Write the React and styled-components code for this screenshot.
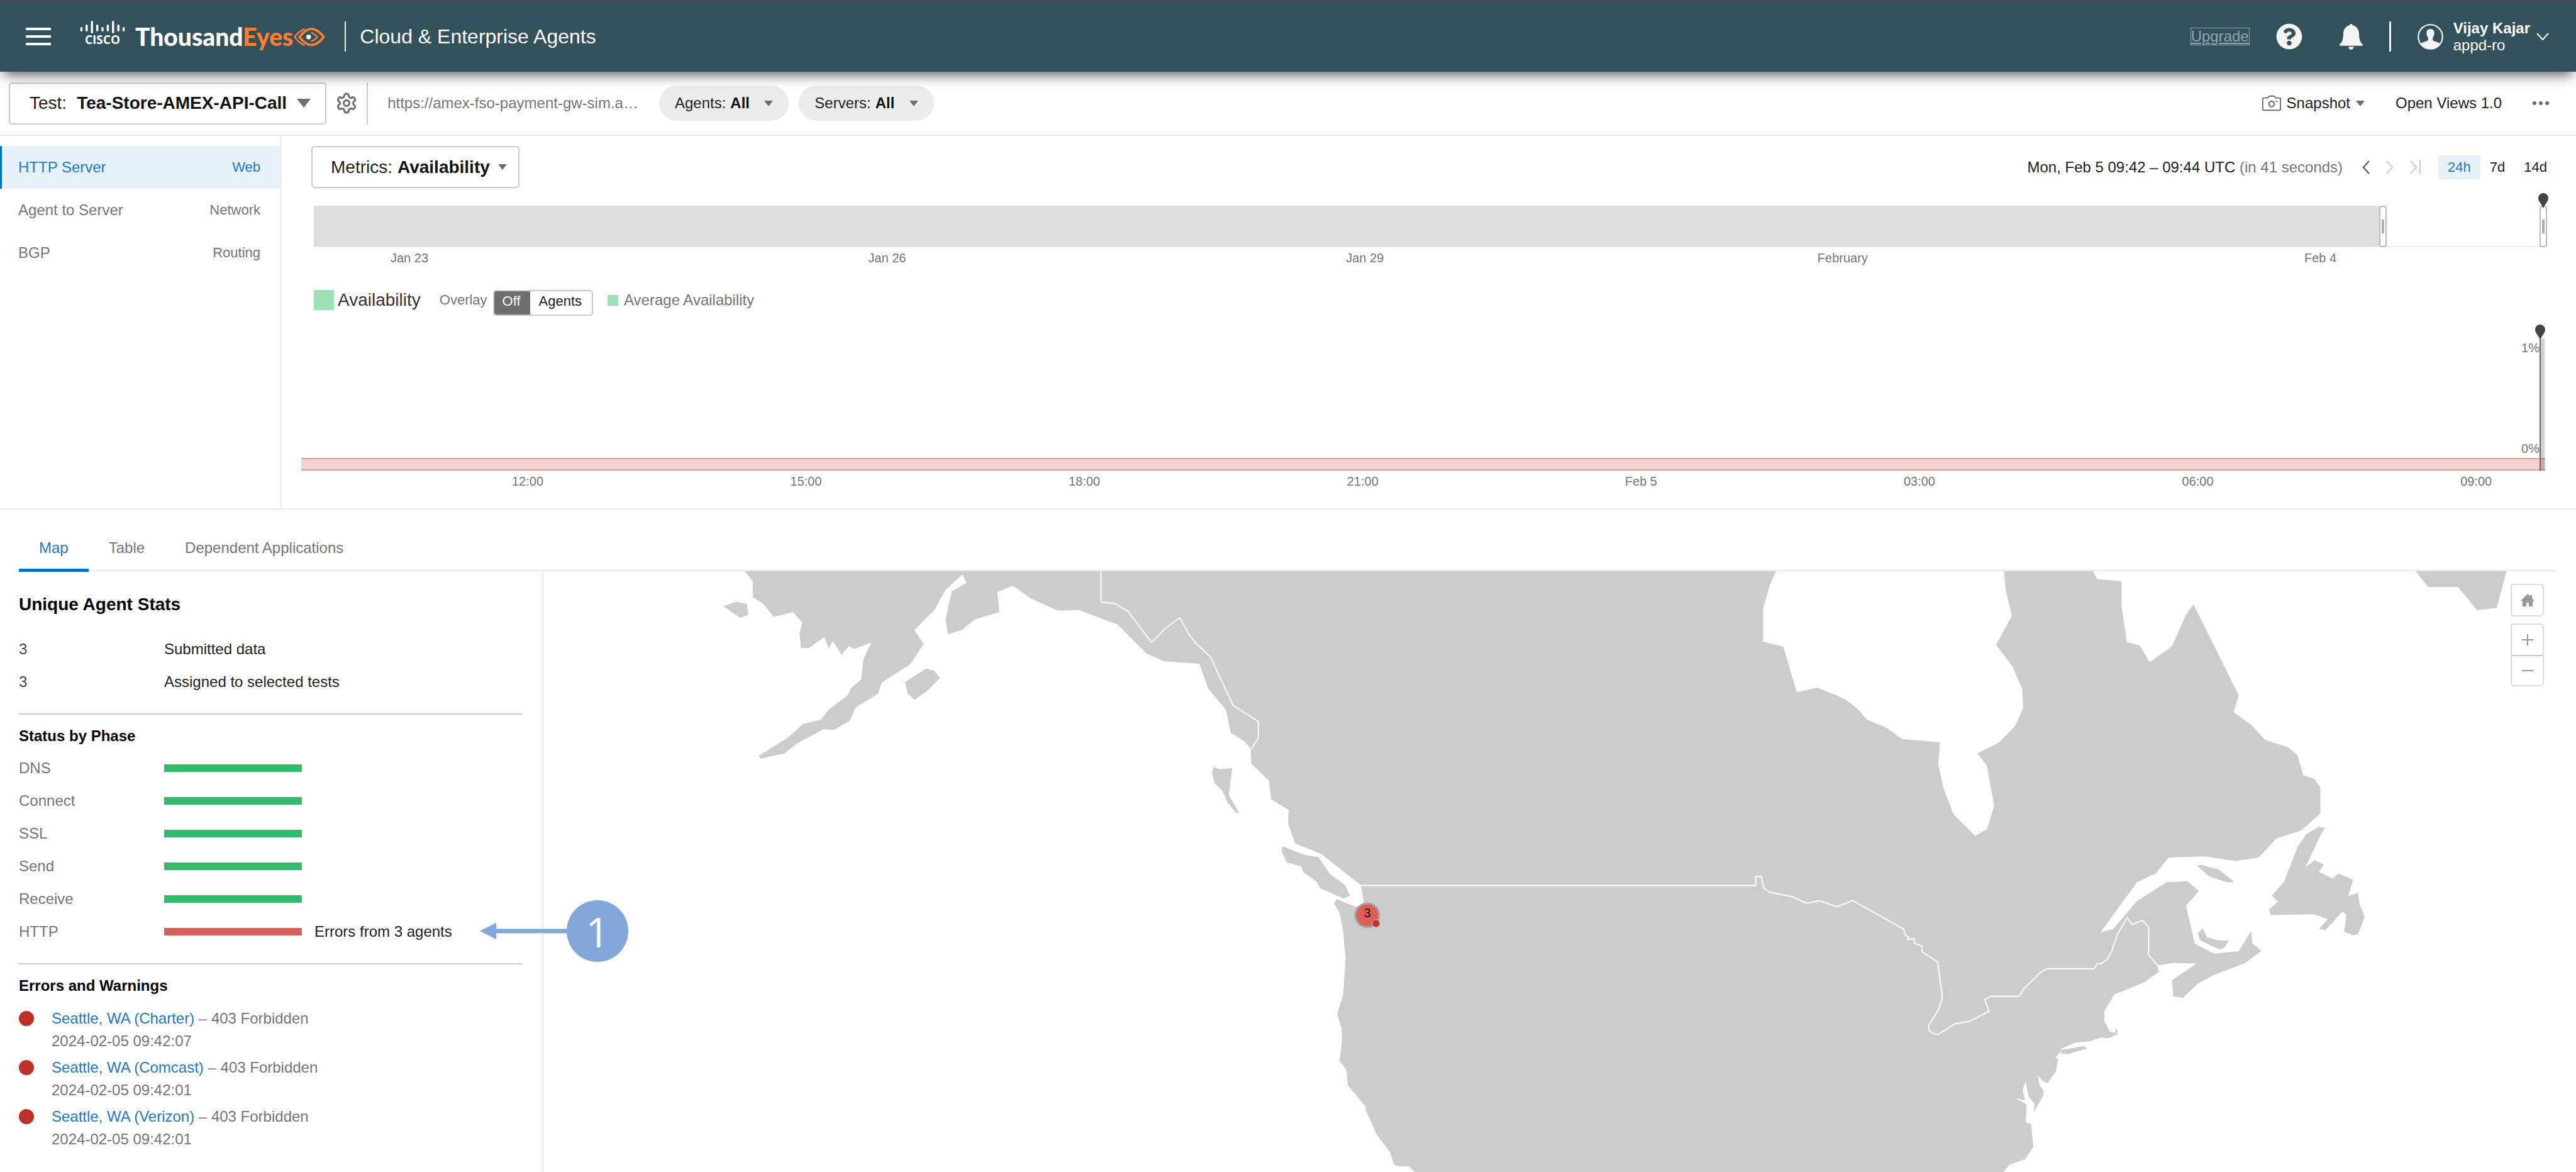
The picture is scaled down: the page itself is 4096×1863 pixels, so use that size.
import React, { useState } from "react";
import styled, { createGlobalStyle, css } from "styled-components";
import { FaQuestionCircle } from "react-icons/fa";
import { Settings } from "lucide-react";

const views = [
  { name: "HTTP Server", layer: "Web" },
  { name: "Agent to Server", layer: "Network" },
  { name: "BGP", layer: "Routing" },
];

const ranges = ["24h", "7d", "14d"];
const days = ["Jan 23", "Jan 26", "Jan 29", "February", "Feb 4"];
const hours = ["12:00", "15:00", "18:00", "21:00", "Feb 5", "03:00", "06:00", "09:00"];
const tabs = ["Map", "Table", "Dependent Applications"];

const stats = [
  { count: 3, label: "Submitted data" },
  { count: 3, label: "Assigned to selected tests" },
];

const phases = [
  { name: "DNS" },
  { name: "Connect" },
  { name: "SSL" },
  { name: "Send" },
  { name: "Receive" },
  { name: "HTTP", error: "Errors from 3 agents", step: 1 },
];

const errors = [
  { agent: "Seattle, WA (Charter)", reason: "403 Forbidden", time: "2024-02-05 09:42:07" },
  { agent: "Seattle, WA (Comcast)", reason: "403 Forbidden", time: "2024-02-05 09:42:01" },
  { agent: "Seattle, WA (Verizon)", reason: "403 Forbidden", time: "2024-02-05 09:42:01" },
];

// share of the 14 day strip that lies before the selected window
const windowStart = 92.8;

const westLand =
  "90,22 108,48 108,90 129,105 153,140 194,128 214,155 208,182 211,220 228,220 261,192 271,222 279,202 298,238 314,215 325,223 362,206 345,248 340,301 317,325 312,341 270,379 254,404 216,415 184,450 120,498 125,505 176,491 202,466 260,429 282,431 316,407 327,374 376,338 384,309 446,261 474,210 454,174 498,121 520,71 557,31 566,52 534,75 521,147 526,185 556,174 583,147 636,128 632,76 665,60 704,93 762,124 806,122 890,160 951,234 988,254 1065,261 1084,325 1122,380 1132,438 1160,459 1175,479 1176,517 1214,562 1219,610 1256,636 1255,672 1270,723 1326,750 1411,830 1418,880 1400,886 1359,866 1354,877 1366,904 1373,950 1378,1020 1373,1112 1360,1162 1370,1200 1370,1240 1365,1281 1380,1306 1383,1345 1420,1398 1422,1411 1445,1472 1474,1518 1481,1546 1487,1552 1515,1554 1527,1570 2200,1570 2200,22";
const westIslands = [
  "45,113 72,101 95,107 98,135 81,143",
  "434,308 479,273 497,279 509,297 483,329 455,353 440,338",
  "1095,526 1107,532 1135,529 1128,598 1150,645 1144,645 1125,617 1114,587 1097,567 1092,542",
  "1243,730 1290,752 1320,758 1345,802 1376,829 1388,857 1374,865 1324,838 1315,820 1288,797 1284,782 1252,772 1241,743",
];
const eastLand =
  "-100,22 -100,1570 655,1570 669,1549 702,1535 720,1503 715,1444 704,1440 705,1394 682,1378 702,1384 697,1357 703,1335 710,1374 723,1393 720,1415 741,1372 742,1358 733,1345 729,1318 739,1333 750,1340 768,1310 773,1277 767,1274 778,1258 781,1250 810,1235 840,1232 864,1222 879,1224 899,1215 901,1205 894,1198 897,1210 884,1207 872,1180 872,1154 894,1111 958,1080 989,1053 985,1037 1020,1030 1070,1032 1017,1075 1020,1116 1040,1120 1073,1083 1105,1062 1173,1031 1209,999 1189,980 1187,948 1160,1000 1107,1006 1066,981 1047,883 1075,845 1050,820 1005,823 942,871 891,943 864,951 942,823 982,800 1010,759 1086,756 1153,768 1203,759 1241,710 1293,690 1335,646 1335,579 1322,557 1298,547 1286,495 1266,476 1216,456 1189,420 1149,385 1160,342 1063,107 1046,137 1017,216 969,257 948,214 920,205 909,110 909,48 856,43 848,22 657,22 661,72 674,138 640,212 675,267 696,325 698,374 682,419 647,463 600,491 620,522 636,625 621,686 595,703 549,648 527,580 516,518 520,463 438,454 405,425 364,405 342,375 314,350 257,322 213,334 184,217 141,204 141,118 155,60 169,22";
const eastIslands = [
  "1070,779 1079,778 1117,790 1148,819 1148,823 1135,823 1096,807",
  "1331,681 1345,683 1336,700 1303,784 1323,766 1342,777 1332,796 1361,813 1374,800 1405,816 1395,858 1416,850 1419,880 1430,911 1416,956 1405,959 1386,950 1391,906 1382,898 1346,946 1332,942 1351,918 1321,905 1229,907 1225,893 1244,873 1231,857 1257,822 1287,730 1305,699",
  "1083,941 1092,964 1115,972 1139,973 1129,992 1118,995 1078,973 1072,955",
  "780,1254 828,1244 835,1251 795,1264 778,1263",
  "1539,22 1566,63 1630,63 1671,123 1713,117 1734,22",
];
const alaskaBorder =
  "854,22 854,102 884,106 912,126 962,206 992,169 1023,142 1041,182 1057,208 1088,242 1137,368 1191,409 1191,452 1176,479";
const canadaBorder =
  "-721,831 125,831 125,808 137,808 142,837 154,848 204,860 234,877 261,870 299,886 333,870 442,943 445,959 453,964 450,970 464,968 466,980 481,987 482,1002 515,1028 525,1118 518,1147 495,1193 498,1206 510,1214 516,1214 552,1187 585,1180 625,1154 616,1125 628,1116 690,1116 699,1097 735,1055 748,1045 850,1045 857,1032 865,1032 878,1022 888,1000 900,957 921,914 932,931 954,921 967,938 967,1010 987,1037";

const Caret = ({ width = 14, height = 9 }) => (
  <svg width={width} height={height} viewBox="0 0 14 9" preserveAspectRatio="none" aria-hidden="true">
    <path d="M0 0h14L7 9z" fill="#6e6e6e" />
  </svg>
);

const CiscoLogo = () => {
  const bars = [
    [13, 20], [9, 20], [3, 23], [9, 20], [13, 20], [9, 20], [3, 23], [9, 20], [13, 20],
  ];
  return (
    <svg width="78" height="48" viewBox="0 0 78 48" role="img" aria-label="Cisco">
      {bars.map(([top, bottom], i) => (
        <path
          key={i}
          d={`M${5.4 + i * 8.4} ${top + 1.7}V${bottom - 1.7}`}
          stroke="#fff"
          strokeWidth="3.4"
          strokeLinecap="round"
        />
      ))}
      <text x="39" y="40" fill="#fff" textAnchor="middle" fontFamily="Open Sans, sans-serif" fontWeight="700" fontSize="19">
        CISCO
      </text>
    </svg>
  );
};

const EyeLogo = () => (
  <svg width="52" height="31" viewBox="0 0 168 100" fill="none" stroke="#ff7f32" aria-hidden="true">
    <path d="M33 51Q65 10 93 9q34 1 64 42-30 41-64 41-28 0-60-41z" strokeWidth="12" />
    <path d="M60 9Q30 20 8 51q22 31 52 43" strokeWidth="8" />
    <path d="M93 28q22 10 31 23-9 13-31 23" strokeWidth="8" />
    <circle cx="80" cy="51" r="12" fill="#fff" stroke="none" />
  </svg>
);

const BellIcon = () => (
  <svg width="37" height="41" viewBox="0 0 117 132" fill="#f5f5f5" aria-hidden="true">
    <path d="M58 0q7 0 8 7 33 7 33 49 0 34 18 47v9H0v-9q18-13 18-47 0-42 32-49 1-7 8-7z" />
    <path d="M45 117h27q-2 15-14 15t-13-15z" />
  </svg>
);

const UserIcon = () => (
  <svg width="41" height="41" viewBox="0 0 132 132" aria-hidden="true">
    <circle cx="66" cy="66" r="62" fill="none" stroke="#f5f5f5" strokeWidth="7" />
    <path
      d="M66 26q20 0 20 22 0 14-8 22v14q6 5 20 8 12 3 16 9-18 26-48 26t-48-26q4-6 16-9 14-3 20-8V70q-8-8-8-22 0-22 20-22z"
      fill="#f5f5f5"
    />
  </svg>
);

const CameraIcon = () => (
  <svg width="30" height="26" viewBox="0 0 96 80" fill="none" stroke="#6e6e6e" strokeWidth="6" aria-hidden="true">
    <path d="M8 13h20l8-9h24l8 9h20q5 0 5 5v52q0 6-5 6H8q-5 0-5-6V18q0-5 5-5z" />
    <circle cx="48" cy="44" r="14" strokeWidth="7" />
    <circle cx="74" cy="31" r="4" fill="#6e6e6e" stroke="none" />
  </svg>
);

const PinIcon = () => (
  <svg width="16" height="24" viewBox="0 0 16 24" aria-hidden="true">
    <path d="M8 0a8 8 0 0 1 8 8c0 5-5 9-8 16C5 17 0 13 0 8a8 8 0 0 1 8-8z" fill="#444" />
  </svg>
);

const Chevron = ({ d, color, width = 14, height = 22, box = "0 0 14 22" }) => (
  <svg width={width} height={height} viewBox={box} fill="none" stroke={color} strokeWidth="2" aria-hidden="true">
    <path d={d} />
  </svg>
);

const WorldMap = () => (
  <MapCanvas viewBox="0 0 3200 955" preserveAspectRatio="xMidYMin slice" role="img" aria-label="Agents by location">
    <g transform="translate(253 -14) scale(0.742 0.618)" fill="#cccccc">
      <polygon points={westLand} />
      {westIslands.map((points) => (
        <polygon key={points} points={points} />
      ))}
      <g transform="translate(2132 0)">
        <polygon points={eastLand} />
        {eastIslands.map((points) => (
          <polygon key={points} points={points} />
        ))}
        <Border points={canadaBorder} />
      </g>
      <Border points={alaskaBorder} />
    </g>
    <circle cx="1310" cy="547" r="19" fill="#dc5e55" stroke="#a5a5a5" strokeWidth="3" />
    <text x="1310" y="550" textAnchor="middle" fontFamily="Liberation Sans, Arial, sans-serif" fontSize="20" fill="#111">
      3
    </text>
    <circle cx="1324" cy="560" r="6" fill="#c02f27" stroke="#e9a9a4" strokeWidth="1" />
  </MapCanvas>
);

export default function App() {
  const [view, setView] = useState("HTTP Server");
  const [range, setRange] = useState("24h");
  const [overlay, setOverlay] = useState("Off");
  const [tab, setTab] = useState("Map");

  return (
    <Page>
      <GlobalStyle />
      <Header>
        <IconButton aria-label="Menu">
          <svg width="40" height="28" viewBox="0 0 40 28" fill="#fff" aria-hidden="true">
            <path d="M0 0h40v4H0zM0 12h40v4H0zM0 24h40v4H0z" />
          </svg>
        </IconButton>
        <Brand>
          <CiscoLogo />
          <Wordmark>
            Thousand<em>Eyes</em>
          </Wordmark>
          <EyeLogo />
        </Brand>
        <HeaderRule />
        <Title>Cloud &amp; Enterprise Agents</Title>
        <HeaderTools>
          <Upgrade href="#upgrade">Upgrade</Upgrade>
          <Notices>
            <IconButton aria-label="Help">
              <FaQuestionCircle size={42} color="#f5f5f5" />
            </IconButton>
            <IconButton aria-label="Notifications">
              <BellIcon />
            </IconButton>
          </Notices>
          <HeaderRule $wide />
          <UserButton>
            <UserIcon />
            <span>
              <strong>Vijay Kajar</strong>
              <br />
              appd-ro
            </span>
            <Chevron d="M1 1l9 10 9-10" color="#fff" width={20} height={12} box="0 0 20 12" />
          </UserButton>
        </HeaderTools>
      </Header>

      <Toolbar>
        <SelectBox $wide>
          <label htmlFor="test">Test:</label>
          <select id="test">
            <option>Tea-Store-AMEX-API-Call</option>
          </select>
          <Caret width={22} height={14} />
        </SelectBox>
        <GearButton aria-label="Test settings">
          <Settings size={36} strokeWidth={2} color="#6e6e6e" />
        </GearButton>
        <ToolbarRule />
        <Target>https://amex-fso-payment-gw-sim.a…</Target>
        <Pills>
          <Pill>
            <label htmlFor="agents">Agents:</label>
            <select id="agents">
              <option>All</option>
            </select>
            <Caret />
          </Pill>
          <Pill>
            <label htmlFor="servers">Servers:</label>
            <select id="servers">
              <option>All</option>
            </select>
            <Caret />
          </Pill>
        </Pills>
        <Actions>
          <TextButton>
            <CameraIcon />
            <span>Snapshot</span>
            <Caret />
          </TextButton>
          <TextButton>Open Views 1.0</TextButton>
          <IconButton aria-label="More">
            <svg width="26" height="6" viewBox="0 0 26 6" fill="#6e6e6e" aria-hidden="true">
              <circle cx="3" cy="3" r="3" />
              <circle cx="13" cy="3" r="3" />
              <circle cx="23" cy="3" r="3" />
            </svg>
          </IconButton>
        </Actions>
      </Toolbar>

      <Top>
        <Sidebar>
          {views.map(({ name, layer }) => (
            <ViewLink key={name} href="#view" $active={name === view} onClick={() => setView(name)}>
              <span>{name}</span>
              <small>{layer}</small>
            </ViewLink>
          ))}
        </Sidebar>
        <Timeline>
          <TimelineBar>
            <SelectBox>
              <label htmlFor="metric">Metrics:</label>
              <select id="metric">
                <option>Availability</option>
              </select>
              <Caret />
            </SelectBox>
            <Period>
              <span>
                Mon, Feb 5 09:42 – 09:44 UTC <i>(in 41 seconds)</i>
              </span>
              <Steps>
                <IconButton aria-label="Previous round">
                  <Chevron d="M12 1L3 11l9 10" color="#555" />
                </IconButton>
                <IconButton aria-label="Next round">
                  <Chevron d="M2 1l9 10-9 10" color="#ccc" />
                </IconButton>
                <IconButton aria-label="Latest round">
                  <Chevron d="M2 1l9 10-9 10M17 0v22" color="#ccc" width={18} box="0 0 18 22" />
                </IconButton>
              </Steps>
              <Ranges>
                {ranges.map((r) => (
                  <RangeButton key={r} $active={r === range} onClick={() => setRange(r)}>
                    {r}
                  </RangeButton>
                ))}
              </Ranges>
            </Period>
          </TimelineBar>

          <Strip>
            <Shade style={{ width: `${windowStart}%` }} />
            <Handle aria-label="Window start" style={{ left: `${windowStart}%` }} />
            <Handle aria-label="Window end" style={{ left: "100%" }} />
            <StripPin>
              <PinIcon />
            </StripPin>
          </Strip>
          <Ticks $columns="repeat(4, 15fr) 7fr" $start={152}>
            {days.map((d) => (
              <span key={d}>{d}</span>
            ))}
          </Ticks>

          <Legend>
            <Swatch $size={32} />
            <Metric>Availability</Metric>
            <OverlayLabel>Overlay</OverlayLabel>
            <Toggle>
              {["Off", "Agents"].map((o) => (
                <ToggleButton key={o} aria-pressed={o === overlay} $active={o === overlay} onClick={() => setOverlay(o)}>
                  {o}
                </ToggleButton>
              ))}
            </Toggle>
            <Swatch $size={17} />
            <Series>Average Availability</Series>
          </Legend>

          <Chart>
            <Plot>
              <span>1%</span>
              <span>0%</span>
            </Plot>
            <Band />
            <Cursor>
              <PinIcon />
            </Cursor>
          </Chart>
          <Ticks $columns="repeat(7, 29fr) 7fr" $start={340}>
            {hours.map((h) => (
              <span key={h}>{h}</span>
            ))}
          </Ticks>
        </Timeline>
      </Top>

      <Tabs role="tablist">
        {tabs.map((t) => (
          <Tab key={t} role="tab" aria-selected={t === tab} $active={t === tab} onClick={() => setTab(t)}>
            {t}
          </Tab>
        ))}
      </Tabs>

      <Bottom>
        <Panel>
          <h2>Unique Agent Stats</h2>
          {stats.map(({ count, label }) => (
            <Row key={label}>
              <b>{count}</b>
              <p>{label}</p>
            </Row>
          ))}
          <hr />
          <h3>Status by Phase</h3>
          <PhaseList>
            {phases.map(({ name, error, step }) => (
              <Row key={name}>
                <span>{name}</span>
                <PhaseStatus>
                  <PhaseBar $failed={Boolean(error)} />
                  {error && <p>{error}</p>}
                </PhaseStatus>
                {step && (
                  <Callout>
                    <svg width="138" height="26" viewBox="0 0 138 26" fill="#84a7db" aria-hidden="true">
                      <path d="M0 13L26 0v9.500h112v7H26V26z" />
                    </svg>
                    <span>{step}</span>
                  </Callout>
                )}
              </Row>
            ))}
          </PhaseList>
          <hr />
          <h3>Errors and Warnings</h3>
          <ErrorList>
            {errors.map(({ agent, reason, time }) => (
              <li key={agent}>
                <Dot />
                <div>
                  <a href="#agent">{agent}</a> – {reason}
                  <br />
                  {time}
                </div>
              </li>
            ))}
          </ErrorList>
        </Panel>
        <MapArea>
          <WorldMap />
          <MapControls>
            <MapButtons>
              <button aria-label="Reset map">
                <svg width="22" height="20" viewBox="0 0 22 20" fill="#999" aria-hidden="true">
                  <path d="M11 0l4 4V2h3v5l4 4h-3v9h-6v-6H9v6H3v-9H0z" />
                </svg>
              </button>
            </MapButtons>
            <MapButtons>
              <button aria-label="Zoom in">
                <svg width="18" height="18" viewBox="0 0 18 18" stroke="#999" strokeWidth="2" aria-hidden="true">
                  <path d="M9 0v18M0 9h18" />
                </svg>
              </button>
              <button aria-label="Zoom out">
                <svg width="18" height="18" viewBox="0 0 18 18" stroke="#999" strokeWidth="2" aria-hidden="true">
                  <path d="M0 9h18" />
                </svg>
              </button>
            </MapButtons>
          </MapControls>
        </MapArea>
      </Bottom>
    </Page>
  );
}

const GlobalStyle = createGlobalStyle`
  * {
    box-sizing: border-box;
  }
  body {
    margin: 0;
    background: #fff;
    color: #222;
    font-family: "Liberation Sans", Arial, sans-serif;
    font-size: 24px;
    line-height: 30px;
  }
  h1, h2, h3, p {
    margin: 0;
  }
  button {
    margin: 0;
    padding: 0;
    border: 0;
    background: none;
    color: inherit;
    font: inherit;
    cursor: pointer;
  }
  a {
    text-decoration: none;
  }
  svg {
    display: block;
    flex: none;
  }
`;

const Page = styled.div`
  display: flex;
  flex-direction: column;
  min-height: 100vh;
`;

const Header = styled.header`
  position: relative;
  z-index: 1;
  display: flex;
  align-items: center;
  height: 114px;
  padding: 0 43px 0 41px;
  border-top: 2px solid #4b464c;
  background: #33515b;
  color: #fff;
  box-shadow: 0 10px 20px -6px rgba(0, 0, 0, 0.7);
`;

const IconButton = styled.button`
  display: flex;
  align-items: center;
  justify-content: center;
`;

const Brand = styled.div`
  display: flex;
  align-items: center;
  margin: 0 30px 0 43px;
  > svg:first-child {
    margin: -8px 13px 0 0;
  }
`;

const Wordmark = styled.span`
  font-family: Lato, sans-serif;
  font-size: 39px;
  line-height: 40px;
  font-weight: 900;
  em {
    color: #ff7f32;
    font-style: normal;
  }
`;

const HeaderRule = styled.div`
  width: ${({ $wide }) => ($wide ? 3 : 2)}px;
  height: 48px;
  background: #f5f5f5;
`;

const Title = styled.h1`
  margin-left: 22px;
  font-size: 32px;
  line-height: 40px;
  font-weight: 400;
`;

const HeaderTools = styled.div`
  display: flex;
  align-items: center;
  gap: 42px;
  margin-left: auto;
`;

const Notices = styled.div`
  display: flex;
  align-items: center;
  gap: 59px;
`;

const Upgrade = styled.a`
  height: 28px;
  overflow: hidden;
  border: 1px solid #93a5aa;
  color: #93a5aa;
  line-height: 26px;
  text-decoration: underline;
`;

const UserButton = styled.button`
  display: flex;
  align-items: center;
  gap: 16px;
  text-align: left;
  line-height: 27px;
  > svg:last-child {
    margin-left: -6px;
  }
`;

const Toolbar = styled.div`
  display: flex;
  align-items: center;
  height: 102px;
  padding: 0 43px 0 14px;
  border-bottom: 2px solid #ececec;
`;

const bareSelect = css`
  select {
    appearance: none;
    padding: 0;
    border: 0;
    background: none;
    color: #111;
    font: inherit;
    font-weight: 700;
  }
`;

const SelectBox = styled.div`
  display: flex;
  align-items: center;
  gap: ${({ $wide }) => ($wide ? 16 : 8)}px;
  height: 67px;
  padding: ${({ $wide }) => ($wide ? "0 23px 0 31px" : "0 18px 0 29px")};
  border: 2px solid #ccc;
  border-radius: 5px;
  background: #fff;
  font-size: 28px;
  line-height: 34px;
  ${bareSelect}
  svg {
    margin-left: ${({ $wide }) => ($wide ? 0 : 5)}px;
  }
`;

const GearButton = styled(IconButton)`
  margin: 0 14px;
`;

const ToolbarRule = styled.div`
  width: 2px;
  height: 67px;
  background: #ccc;
`;

const Target = styled.span`
  margin: 0 33px 0 31px;
  color: #777;
`;

const Pills = styled.div`
  display: flex;
  gap: 16px;
`;

const Pill = styled.div`
  display: flex;
  align-items: center;
  gap: 7px;
  height: 56px;
  padding: 0 25px;
  border-radius: 28px;
  background: #ececec;
  ${bareSelect}
  svg {
    margin-left: 16px;
  }
`;

const Actions = styled.div`
  display: flex;
  align-items: center;
  gap: 49px;
  margin-left: auto;
`;

const TextButton = styled.button`
  display: flex;
  align-items: center;
  gap: 9px;
`;

const Top = styled.section`
  display: flex;
  border-bottom: 2px solid #ececec;
`;

const Sidebar = styled.nav`
  width: 448px;
  flex: none;
  padding-top: 16px;
  border-right: 2px solid #ececec;
`;

const ViewLink = styled.a`
  display: flex;
  align-items: center;
  justify-content: space-between;
  height: 68px;
  padding: 0 32px 0 26px;
  border-left: 3px solid ${({ $active }) => ($active ? "#0071c5" : "transparent")};
  background: ${({ $active }) => ($active ? "#e6f1fa" : "none")};
  color: ${({ $active }) => ($active ? "#2279c5" : "#757575")};
  small {
    font-size: 22px;
  }
`;

const Timeline = styled.div`
  flex: 1;
  min-width: 0;
  padding: 16px 31px 31px 47px;
`;

const TimelineBar = styled.div`
  display: flex;
  align-items: center;
  justify-content: space-between;
`;

const Period = styled.div`
  display: flex;
  align-items: center;
  i {
    color: #777;
    font-style: normal;
  }
`;

const Steps = styled.div`
  display: flex;
  gap: 24px;
  margin: 0 28px 0 30px;
`;

const Ranges = styled.div`
  display: flex;
`;

const RangeButton = styled.button`
  height: 38px;
  padding: 0 15px;
  border-radius: 3px 0 0 3px;
  background: ${({ $active }) => ($active ? "#e6f1fa" : "none")};
  color: ${({ $active }) => ($active ? "#2279c5" : "#222")};
  font-size: 22px;
`;

const Strip = styled.div`
  position: relative;
  height: 66px;
  margin: 28px 21px 0 4px;
  border-bottom: 2px solid #ececec;
`;

const Shade = styled.div`
  height: 65px;
  background: #ddd;
`;

const Handle = styled.button`
  position: absolute;
  top: 0;
  width: 12px;
  height: 66px;
  border: 2px solid #bbb;
  border-radius: 4px;
  background: linear-gradient(#b0b0b0, #b0b0b0) center / 4px 22px no-repeat #fff;
  transform: translateX(-50%);
`;

const StripPin = styled.div`
  position: absolute;
  right: -8px;
  bottom: 60px;
`;

const Ticks = styled.div`
  display: grid;
  grid-template-columns: ${({ $columns }) => $columns};
  margin: 5px 21px 0 4px;
  padding-left: ${({ $start }) => $start}px;
  color: #757575;
  font-size: 20px;
  line-height: 24px;
  span {
    justify-self: start;
    transform: translateX(-50%);
  }
`;

const Legend = styled.div`
  display: flex;
  align-items: center;
  height: 36px;
  margin: 37px 0 0 4px;
`;

const Swatch = styled.span`
  width: ${({ $size }) => $size}px;
  height: ${({ $size }) => $size}px;
  background: #9be2b6;
`;

const Metric = styled.span`
  margin: 0 30px 0 6px;
  color: #333;
  font-size: 28px;
`;

const OverlayLabel = styled.span`
  margin-right: 9px;
  color: #757575;
  font-size: 22px;
`;

const Toggle = styled.div`
  display: flex;
  height: 41px;
  margin: 8px 23px 0 0;
  overflow: hidden;
  border: 2px solid #ccc;
  border-radius: 5px;
`;

const ToggleButton = styled.button`
  margin: -2px;
  padding: 0 ${({ $active }) => ($active ? 15 : 18)}px 4px;
  background: ${({ $active }) => ($active ? "#6e6e6e" : "none")};
  color: ${({ $active }) => ($active ? "#fff" : "#222")};
  font-size: 22px;
`;

const Series = styled.span`
  margin-left: 9px;
  color: #757575;
`;

const Chart = styled.div`
  position: relative;
  margin: 21px 18px 0 -16px;
`;

const Plot = styled.div`
  display: flex;
  flex-direction: column;
  align-items: flex-end;
  justify-content: space-between;
  height: 212px;
  padding: 25px 9px 3px 0;
  color: #757575;
  font-size: 20px;
  line-height: 24px;
`;

const Band = styled.div`
  height: 20px;
  border: solid #d99e9a;
  border-width: 2px 0;
  background: #f4d1cf;
`;

const Cursor = styled.div`
  position: absolute;
  top: 0;
  right: 0;
  bottom: 0;
  display: flex;
  flex-direction: column;
  &::after {
    content: "";
    flex: 1;
    width: 6px;
    margin: -2px 0 0 7px;
    border-left: 2px solid #666;
    background: rgba(0, 0, 0, 0.18);
    background-clip: padding-box;
  }
`;

const Tabs = styled.div`
  display: flex;
  height: 98px;
  margin: 0 32px 0 30px;
  border-bottom: 2px solid #ececec;
`;

const Tab = styled.button`
  height: 99px;
  padding: 28px 32px 0;
  border-bottom: 5px solid ${({ $active }) => ($active ? "#0071c5" : "transparent")};
  color: ${({ $active }) => ($active ? "#2279c5" : "#757575")};
`;

const Bottom = styled.section`
  display: flex;
  flex: 1;
`;

const Panel = styled.div`
  width: 864px;
  flex: none;
  padding: 36px 32px 20px 30px;
  border-right: 2px solid #ececec;
  h2,
  h3 {
    color: #000;
    font-weight: 700;
  }
  h2 {
    margin-bottom: 28px;
    font-size: 28px;
    line-height: 34px;
  }
  h3 {
    font-size: 24px;
  }
  hr {
    height: 2px;
    margin: 24px 0 19px;
    border: 0;
    background: #ccc;
  }
`;

const Row = styled.div`
  position: relative;
  display: grid;
  grid-template-columns: 231px 1fr;
  align-items: center;
  height: 52px;
  color: #757575;
  b {
    color: #444;
    font-weight: 400;
  }
  p {
    color: #222;
  }
`;

const PhaseList = styled.div`
  padding-top: 10px;
`;

const PhaseStatus = styled.div`
  display: flex;
  align-items: center;
  gap: 20px;
`;

const PhaseBar = styled.div`
  width: 219px;
  height: 12px;
  background: ${({ $failed }) => ($failed ? "#da5e55" : "#31bb6d")};
`;

// sits over the panel edge and the map
const Callout = styled.div`
  position: absolute;
  z-index: 1;
  left: 733px;
  top: -24px;
  display: flex;
  align-items: center;
  span {
    width: 98px;
    height: 98px;
    border-radius: 50%;
    background: #84a7db;
    color: #fff;
    font-family: "Open Sans", sans-serif;
    font-size: 66px;
    line-height: 98px;
    text-align: center;
  }
`;

const ErrorList = styled.ul`
  display: grid;
  gap: 6px;
  margin: 19px 0 0;
  padding: 0;
  color: #757575;
  line-height: 36px;
  list-style: none;
  li {
    display: flex;
    gap: 28px;
  }
  a {
    color: #2279c5;
  }
`;

const Dot = styled.span`
  width: 24px;
  height: 24px;
  margin-top: 6px;
  border-radius: 50%;
  background: #c02f27;
`;

const MapArea = styled.div`
  position: relative;
  flex: 1;
  margin-right: 32px;
  overflow: hidden;
`;

const MapCanvas = styled.svg`
  position: absolute;
  inset: 0;
  width: 100%;
  height: 100%;
`;

const Border = styled.polyline`
  fill: none;
  stroke: #fff;
  stroke-width: 2px;
  vector-effect: non-scaling-stroke;
`;

const MapControls = styled.div`
  position: absolute;
  top: 20px;
  right: 19px;
  display: grid;
  gap: 11px;
`;

const MapButtons = styled.div`
  width: 53px;
  border: 2px solid #ddd;
  border-radius: 5px;
  background: #fff;
  button {
    display: flex;
    align-items: center;
    justify-content: center;
    width: 100%;
    height: 48px;
  }
  button + button {
    border-top: 2px solid #ccc;
  }
`;
